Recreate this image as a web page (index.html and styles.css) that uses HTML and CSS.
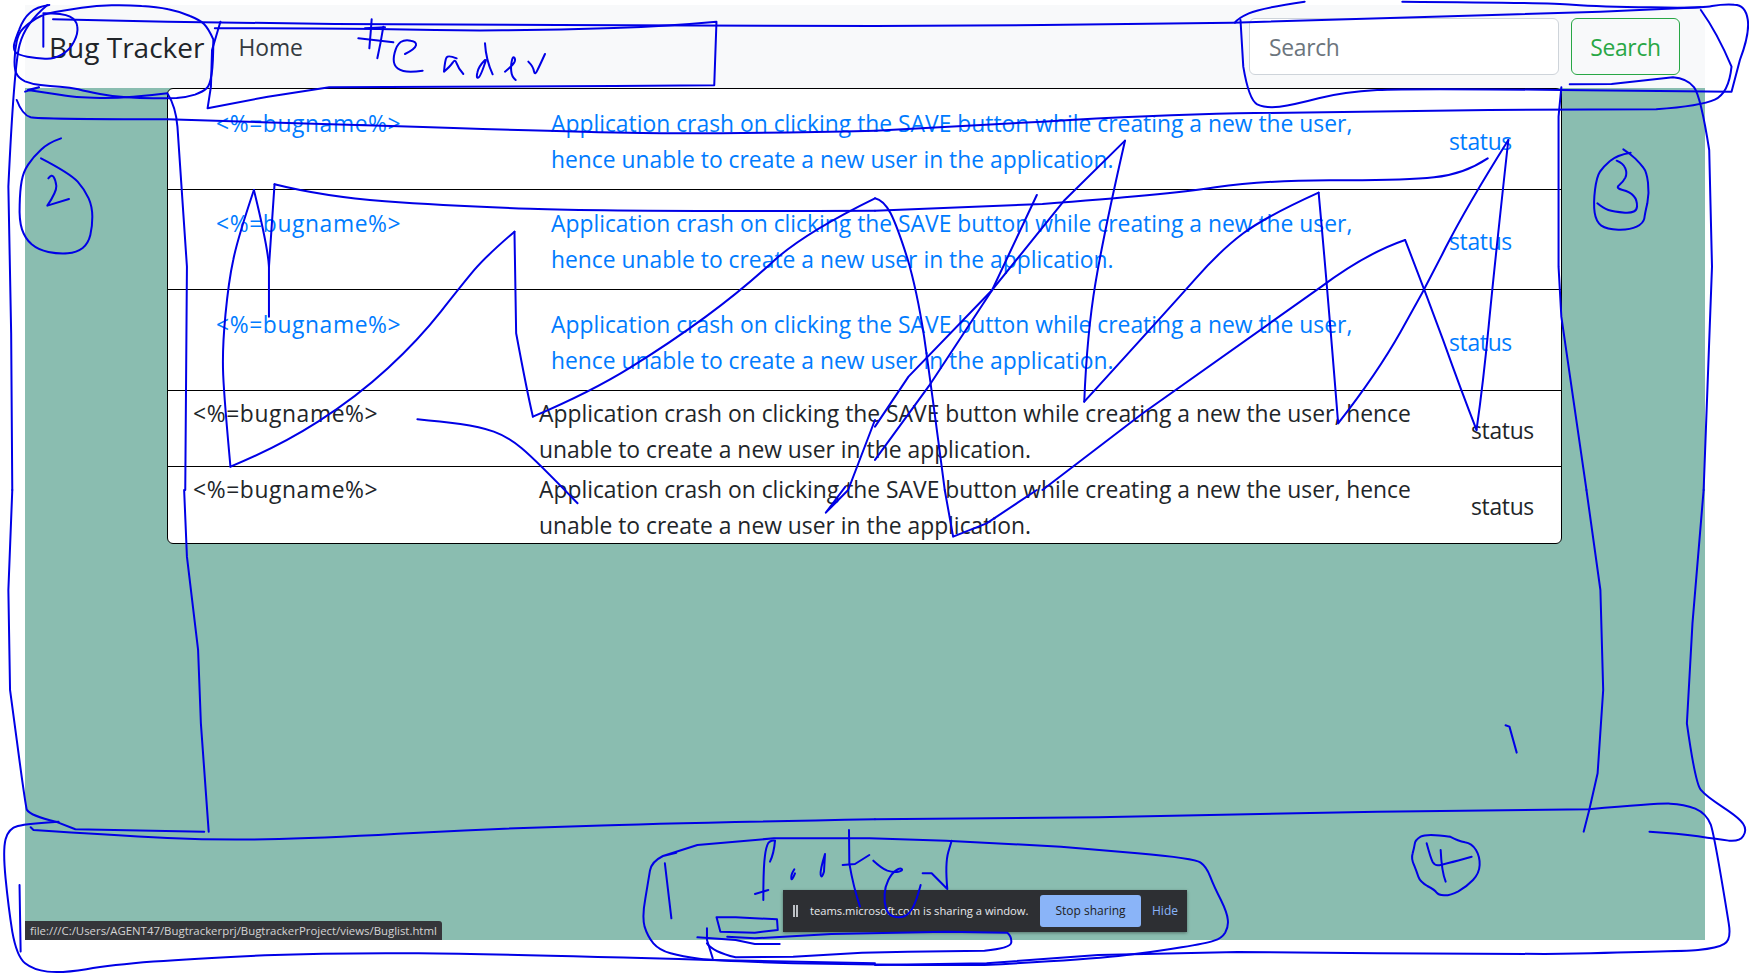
FILE: index.html
```html
<!DOCTYPE html>
<html lang="en">
<head>
<meta charset="utf-8">
<title>Bug Tracker</title>
<link rel="stylesheet" href="styles.css">
</head>
<body>
<div class="frame">
  <nav class="navbar">
    <a class="brand">Bug Tracker</a>
    <a class="nav-link">Home</a>
    <form class="search">
      <input class="search-input" placeholder="Search">
      <button class="search-btn" type="button">Search</button>
    </form>
  </nav>
  <main class="content">
    <div class="list">
      <div class="row row-active"><span class="name">&lt;%=bugname%&gt;</span><span class="desc">Application crash on clicking the SAVE button while creating a new the user, hence unable to create a new user in the application.</span><span class="status">status</span></div>
      <div class="row row-active"><span class="name">&lt;%=bugname%&gt;</span><span class="desc">Application crash on clicking the SAVE button while creating a new the user, hence unable to create a new user in the application.</span><span class="status">status</span></div>
      <div class="row row-active"><span class="name">&lt;%=bugname%&gt;</span><span class="desc">Application crash on clicking the SAVE button while creating a new the user, hence unable to create a new user in the application.</span><span class="status">status</span></div>
      <div class="row row-plain"><span class="name">&lt;%=bugname%&gt;</span><span class="desc">Application crash on clicking the SAVE button while creating a new the user, hence unable to create a new user in the application.</span><span class="status">status</span></div>
      <div class="row row-plain"><span class="name">&lt;%=bugname%&gt;</span><span class="desc">Application crash on clicking the SAVE button while creating a new the user, hence unable to create a new user in the application.</span><span class="status">status</span></div>
    </div>
  </main>
</div>
<div class="status-bubble">file:///C:/Users/AGENT47/Bugtrackerprj/BugtrackerProject/views/Buglist.html</div>
<div class="share-bar">
  <span class="pause"></span>
  <span class="share-text">teams.microsoft.com is sharing a window.</span>
  <button class="stop-btn" type="button">Stop sharing</button>
  <span class="hide-link">Hide</span>
</div>
<svg class="ink" width="1749" height="974" viewBox="0 0 1749 974" fill="none">
  <g transform="scale(.558 .3333)">
    <path d="M395,65 L380,150 L378,260 L372,325 L480,290 L590,262 L800,260 L1100,258 L1280,256 L1284,65 Q1200,78 1100,84 Q1000,90 900,91 Q800,92 700,88 Q600,85 385,85"/>
    <path d="M95,58 L300,65 L600,72 L1000,75 L1568,78"/>
    <path d="M22,1470 L20,1000 L15,560 Q25,200 35,135 Q45,70 85,15"/>
    <path d="M30,300 Q40,345 55,352 Q70,358 300,358 L700,378 Q1000,395 1150,399 Q1300,402 1568,392"/>
    <path d="M45,275 L70,262 L50,270 L110,285 Q130,292 180,294 Q230,295 300,280 Q315,320 318,380 Q320,440 335,800 L332,1470"/>
    <path d="M455,570 Q480,740 482,800"/>
    <path d="M492,553 Q580,590 690,604 Q800,618 950,626 Q1100,635 1568,632"/>
    <path d="M492,553 L482,800 L482,950"/>
    <path d="M455,570 Q425,720 418,780 Q410,840 404,945 Q398,1050 400,1125 Q402,1200 413,1400"/>
    <path d="M413,1400 Q500,1340 570,1265 Q640,1190 695,1105 Q750,1020 790,935 Q830,850 850,810 Q870,770 922,695"/>
    <path d="M922,695 L925,1000 Q945,1180 955,1250"/>
    <path d="M955,1250 Q1060,1175 1130,1102 Q1200,1030 1265,950 Q1330,870 1385,785 Q1440,700 1568,595"/>
    <path d="M748,1258 Q790,1265 825,1272 Q860,1280 885,1295 Q910,1310 935,1345 Q960,1380 1035,1510"/>
  </g>
  <g transform="translate(350 10) scale(.3333)">
    <path d="M65,28 Q62,70 58,115"/>
    <path d="M100,50 Q92,100 82,145"/>
    <path d="M25,85 Q70,90 130,97"/>
    <path d="M45,55 L105,52"/>
    <path d="M165,132 Q195,118 198,106 Q200,95 182,92 Q165,88 152,96 Q140,105 134,128 Q128,150 134,164 Q140,178 160,183 Q180,188 218,182"/>
    <path d="M320,145 Q295,135 290,142 Q285,150 282,185 Q300,170 308,158 Q315,145 320,160 Q325,175 340,192"/>
    <path d="M405,100 Q408,150 428,193"/>
    <path d="M405,150 Q385,170 382,188 Q378,205 385,203 Q392,200 408,150"/>
    <path d="M465,185 Q490,165 494,155 Q497,145 492,142 Q488,140 485,155 Q482,170 484,185 Q485,200 497,210"/>
    <path d="M535,155 Q550,170 552,184 Q555,197 562,181 Q570,165 585,132"/>
  </g>
  <g transform="translate(15 130) scale(.3333)">
    <path d="M138,25 Q100,38 78,59 Q55,80 40,103 Q25,125 20,153 Q15,180 14,225 Q12,270 21,298 Q30,325 50,343 Q70,360 100,366 Q130,372 158,370 Q185,368 203,354 Q220,340 226,315 Q232,290 232,260 Q232,230 221,205 Q210,180 188,155 Q165,130 78,85"/>
    <path d="M100,145 Q110,132 116,141 Q122,150 124,168 Q125,185 97,227 L162,207"/>
  </g>
  <g transform="scale(.3333)">
    <path d="M640,118 Q625,85 612,72 Q600,60 570,48 Q540,35 505,28 Q470,20 425,18 Q380,15 335,16 Q290,17 245,23 Q200,30 165,36 Q130,42 108,56 Q85,70 70,85 Q55,100 50,125 Q45,150 44,175 Q42,200 48,218 Q55,235 75,244 Q95,252 122,255 Q150,258 180,260 Q210,262 235,268 Q260,275 300,282 Q340,290 380,292 Q420,295 460,295 Q500,295 530,294 Q560,292 585,284 Q610,275 620,265 Q630,255 635,222 Q640,190 640,118"/>
    <path d="M148,15 Q110,20 90,38 Q70,55 58,88 Q45,120 42,135 Q40,150 48,158 Q55,165 82,170 Q110,175 135,176 Q160,178 185,164 Q210,150 222,125 Q235,100 232,80 Q230,60 210,50 Q190,40 130,40"/>
    <path d="M130,50 L130,140"/>
  </g>
  <g transform="translate(875 0) scale(.558 .3333)">
    <path d="M0,78 L300,75 L640,68 L1000,50 L1300,35 L1480,22"/>
    <path d="M0,392 L300,365 Q500,345 650,340 Q800,335 1100,330 L1400,328 Q1480,318 1505,299 Q1530,280 1535,200 Q1510,100 1480,30"/>
    <path d="M655,60 L660,200 Q670,300 685,313 Q700,325 725,320 Q750,315 795,295 Q840,275 900,270 Q960,265 1230,270 L1535,275 L1550,180 Q1568,100 1564,58 Q1560,15 1540,14 Q1520,12 1500,18 Q1480,25 1390,22 Q1300,20 1250,14 Q1200,8 945,5"/>
    <path d="M770,5 Q690,25 670,40 Q650,55 645,68"/>
    <path d="M0,632 L300,612 Q520,585 610,562 Q700,540 825,541 Q950,542 1002,532 Q1055,523 1098,475"/>
    <path d="M0,595 Q15,600 28,640 Q40,680 58,775 Q75,870 88,1010 Q100,1150 125,1470"/>
    <path d="M300,1470 L480,1240 L800,860 Q880,760 950,720"/>
    <path d="M950,720 Q985,870 1018,1020 Q1050,1170 1078,1290"/>
    <path d="M1078,1290 Q1090,1150 1100,975 Q1110,800 1135,420"/>
    <path d="M1135,420 Q1060,620 1022,745 Q985,870 942,995 Q900,1120 830,1270"/>
    <path d="M830,1270 Q810,850 795,578"/>
    <path d="M795,578 Q700,650 660,700 Q620,750 575,835 Q530,920 375,1205"/>
    <path d="M375,1205 Q380,1000 395,850 Q410,700 448,422"/>
    <path d="M448,422 L340,600 L210,870 L60,1130 L0,1280"/>
    <path d="M290,585 L210,870 L100,1150 L0,1380"/>
    <path d="M1230,262 L1225,350 L1225,800 L1230,950 L1275,1470"/>
    <path d="M1245,253 L1320,252 L1430,232 Q1455,235 1468,262 Q1480,290 1495,450 L1500,800 L1485,1470"/>
  </g>
  <g transform="translate(1580 140) scale(.3333)">
    <path d="M130,28 Q152,42 166,56 Q180,70 190,83 Q200,95 204,128 Q208,160 202,190 Q195,220 193,235 Q190,250 170,260 Q150,270 115,269 Q80,268 64,257 Q48,245 44,218 Q40,190 45,150 Q50,110 60,95 Q70,80 90,63 Q110,45 152,38"/>
    <path d="M110,62 Q130,70 136,85 Q142,100 136,113 Q130,125 118,135 Q105,145 128,150 Q150,155 161,168 Q172,180 171,200 Q170,220 135,218 Q100,215 85,210 Q70,205 52,190"/>
  </g>
  <g transform="translate(0 490) scale(.558 .3333)">
    <path d="M330,0 L335,200 L355,480 L360,700 L374,1025"/>
    <path d="M366,1025 L135,1018 L100,995 Q55,978 48,959 Q45,940 30,750 L18,600 L15,300 L22,0"/>
    <path d="M55,1012 L60,1020 Q200,1035 300,1044 Q400,1052 500,1047 Q600,1042 750,1028 Q900,1015 1050,1008 Q1200,1000 1568,988"/>
    <path d="M1568,1420 L1270,1410 Q900,1392 750,1390 Q600,1388 475,1396 Q350,1405 275,1415 Q200,1425 155,1438 Q110,1450 85,1445 Q60,1440 45,1420 Q30,1400 22,1325 Q15,1250 10,1165 Q5,1080 10,1048 Q15,1015 32,1008 Q50,1000 105,995"/>
    <path d="M35,1185 L37,1385"/>
    <path d="M1568,-210 L1520,0 L1480,68 L1515,-10"/>
  </g>
  <g transform="translate(875 490) scale(.558 .3333)">
    <path d="M125,0 L140,140 L200,100 L290,0"/>
    <path d="M0,988 L400,982 L900,965 L1280,958 Q1400,940 1425,941 Q1450,942 1470,956 Q1490,970 1498,1005 Q1505,1040 1530,1300 Q1535,1350 1522,1362 Q1510,1375 1475,1380 Q1440,1385 1200,1392 L900,1390 L650,1386 L400,1395 L200,1420 L0,1425"/>
    <path d="M1275,0 L1300,300 L1305,600 L1295,850 L1280,960 L1270,1025"/>
    <path d="M1485,0 L1465,400 L1455,700 Q1470,880 1480,900 Q1490,920 1520,952 Q1550,985 1556,1002 Q1563,1020 1556,1038 Q1550,1055 1530,1052 Q1510,1048 1475,1039 Q1440,1030 1388,1025"/>
    <path d="M1130,706 L1137,710 L1150,788"/>
  </g>
  <g transform="translate(1400 825) scale(.3333)">
    <path d="M150,35 Q80,25 62,35 Q45,45 44,58 Q42,70 38,85 Q33,100 42,120 Q50,140 55,155 Q60,170 82,183 Q105,195 110,203 Q115,210 132,211 Q150,212 175,199 Q200,185 219,165 Q238,145 239,120 Q240,95 228,75 Q215,55 195,52 Q175,48 150,35"/>
    <path d="M80,55 Q92,100 98,111 Q105,122 115,121 Q125,120 215,95"/>
    <path d="M122,75 Q125,140 137,170"/>
  </g>
  <g transform="translate(640 830) scale(.3827 .3333)">
    <path d="M95,68 L60,78 Q30,95 26,122 Q22,150 14,205 Q5,260 12,290 Q20,320 35,340 Q50,360 80,370 Q110,380 155,386 Q200,392 400,400 L700,405 L900,405 Q1150,390 1250,378 Q1350,365 1415,352 Q1480,340 1500,332 Q1520,325 1529,308 Q1538,290 1536,270 Q1535,250 1518,210 Q1500,170 1490,140 Q1480,110 1465,98 Q1450,85 1300,70 L1100,50 L800,32 L600,25 L350,25 L150,45 L60,78"/>
    <path d="M65,100 L82,265"/>
    <path d="M200,262 L250,262 L358,268 L360,300 L300,308 L210,305 L200,262"/>
    <path d="M175,295 L175,330 L190,385"/>
    <path d="M150,322 L250,330 L300,342 L365,342"/>
    <path d="M228,320 L300,325 L500,312 L800,305 L960,308 Q972,320 970,338 Q968,355 900,362 L700,365 L580,368 L400,380 L250,382 Q190,365 175,340"/>
  </g>
  <g transform="translate(740 830) scale(.3333)">
    <path d="M105,32 Q88,30 82,45 Q76,60 73,95 Q70,130 70,210"/>
    <path d="M105,32 Q102,70 90,95"/>
    <path d="M45,192 L85,180"/>
    <path d="M163,118 Q152,135 154,145 Q155,155 165,130"/>
    <path d="M255,72 Q240,120 242,134 Q245,148 252,125 L255,72"/>
    <path d="M327,0 L328,100 Q340,170 360,230"/>
    <path d="M308,105 L345,102 L388,75"/>
    <path d="M400,92 Q425,115 442,122 Q460,128 475,125 Q490,122 485,117 Q480,112 468,121 Q455,130 445,150 Q435,170 434,192 Q432,215 438,235 Q445,255 462,260 Q480,265 495,258 Q510,250 520,230 Q530,210 542,165"/>
    <path d="M548,130 L575,130 L622,177 Q615,100 625,66 L635,32"/>
  </g>
</svg>
</body>
</html>
```
FILE: styles.css
```css
* { box-sizing: border-box; }
html, body { margin: 0; height: 100%; background: #fff; overflow: hidden; }
body { font-family: "Open Sans", "Noto Sans", sans-serif; font-size: 22.85px; line-height: 36px; color: #212529; }
.frame { margin: 5px 44px 0 25px; height: 935px; display: flex; flex-direction: column; }
.navbar { height: 83px; background: #f8f9fa; display: flex; align-items: center; padding: 0 25px 0 24px; flex: none; }
.brand { font-size: 28px; margin-right: 34px; color: #212529; }
.nav-link { color: #343a40; letter-spacing: -.05px; padding-top: 2px; }
.search { margin-left: auto; display: flex; gap: 12px; }
.search-input { width: 310px; height: 57px; border: 1px solid #ced4da; border-radius: 6px; padding: 2px 19px 0; font: inherit; letter-spacing: -.3px; background: #fff; }
.search-input::placeholder { color: #6c757d; opacity: 1; }
.search-btn { width: 109px; height: 57px; border: 1px solid #28a745; border-radius: 6px; background: transparent; color: #28a745; font: inherit; letter-spacing: -.3px; padding: 2px 0 0; }
.content { flex: 1; background: #8abdb0; padding: 0 143px 0 142px; }
.list { background: #fff; border: 1px solid #000; border-radius: 6px; }
.row { display: grid; border-bottom: 1px solid #000; }
.row:last-child { border-bottom: 0; }
.name { letter-spacing: .6px; }
.status { padding-top: 18px; letter-spacing: -.3px; }
.row-active { color: #007bff; height: 100.5px; padding: 16.5px 0 0 48px; grid-template-columns: 335px 840px 1fr; }
.row-active .status { margin-left: 58px; }
.row-plain { height: 76px; padding: 5px 0 0 25px; grid-template-columns: 346px 905px 1fr; }
.row-plain .status { margin-left: 27px; padding-top: 17px; }
.status-bubble { position: absolute; left: 25px; top: 921px; height: 19px; width: 417px; padding-left: 5px; background: #35363a; border-radius: 0 3px 0 0; color: #d4d4d4; font-size: 11.4px; line-height: 19px; white-space: nowrap; }
.share-bar { position: absolute; left: 783px; top: 890px; width: 404px; height: 42px; background: #2d2f33; box-shadow: 0 1px 3px rgba(0,0,0,.4); display: flex; align-items: center; padding-left: 10px; font-size: 12px; line-height: 16px; color: #e8eaed; }
.pause { width: 5px; height: 12px; border-left: 2px solid #bdc1c6; border-right: 2px solid #bdc1c6; margin-right: 12px; }
.share-text { white-space: nowrap; width: 230px; font-size: 11.2px; }
.stop-btn { width: 101px; height: 32px; border: 0; border-radius: 3px; background: #8ab4f8; color: #202124; font: inherit; padding: 0; }
.hide-link { color: #8ab4f8; margin-left: 11px; }
.ink { position: absolute; left: 0; top: 0; pointer-events: none; }
.ink path { stroke: #0000e6; stroke-width: 2; stroke-linejoin: round; stroke-linecap: round; vector-effect: non-scaling-stroke; }
```
